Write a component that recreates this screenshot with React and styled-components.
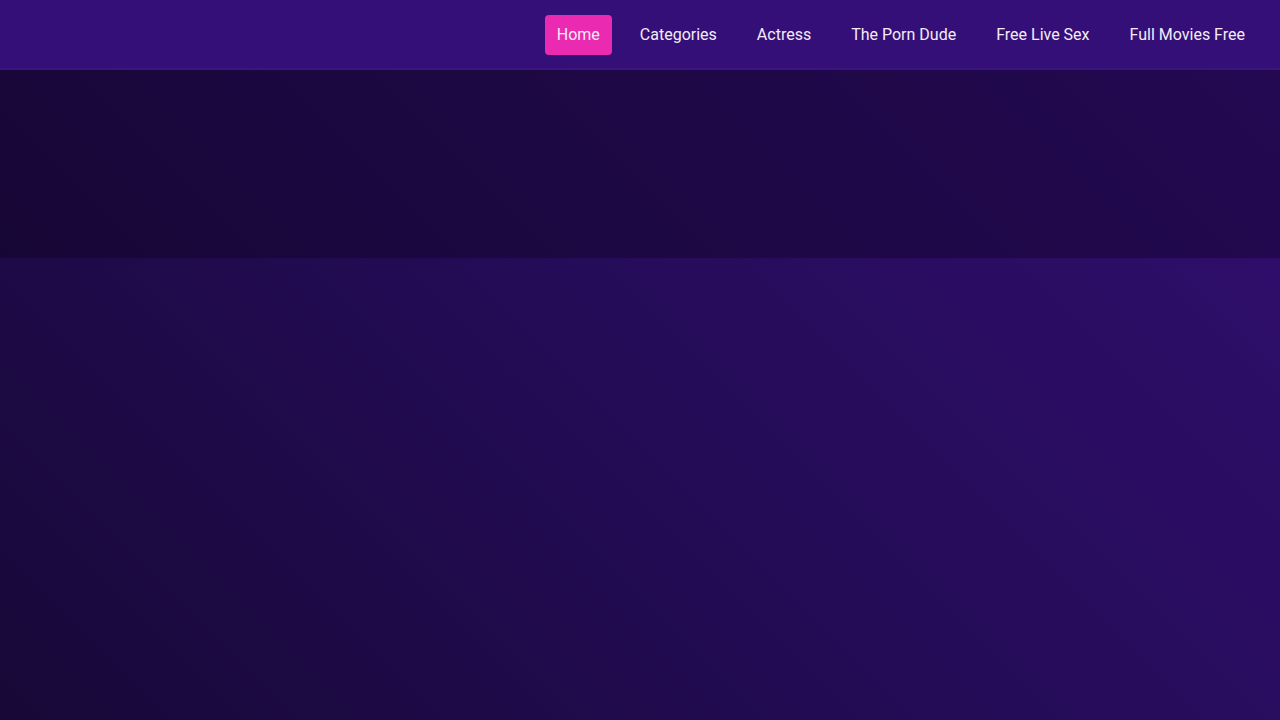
import React from 'react';
import styled, { createGlobalStyle } from 'styled-components';

const GlobalStyle = createGlobalStyle`
  * { box-sizing: border-box; }
  html, body { margin: 0; padding: 0; }
  body {
    font-family: Roboto, "Liberation Sans", sans-serif;
    background: linear-gradient(45deg, #170837 0%, #250c58 50%, #310e70 100%);
    min-height: 100vh;
  }
`;

const Page = styled.div`
  min-height: 100vh;
  display: flex;
  flex-direction: column;
`;

const Header = styled.header`
  height: 70px;
  background: #340f78;
  border-bottom: 2px solid #3a1580;
  display: flex;
  align-items: center;
  justify-content: flex-end;
  padding: 1px 23px 0 0;
`;

const Nav = styled.nav`
  display: flex;
  align-items: center;
  gap: 16px;
`;

const NavLink = styled.a`
  display: block;
  padding: 10px 12px;
  border-radius: 4px;
  font-size: 16px;
  line-height: 20px;
  font-weight: 400;
  color: #f5ebf7;
  text-decoration: none;
  background: ${p => (p.$active ? '#ea2bb2' : 'transparent')};
  cursor: pointer;
`;

const Banner = styled.section`
  height: 188px;
  background: rgba(8, 0, 20, 0.32);
`;

const links = ['Home', 'Categories', 'Actress', 'The Porn Dude', 'Free Live Sex', 'Full Movies Free'];

export default function App() {
  return (
    <>
      <GlobalStyle />
      <Page>
        <Header>
          <Nav>
            {links.map((l, i) => (
              <NavLink key={l} $active={i === 0}>{l}</NavLink>
            ))}
          </Nav>
        </Header>
        <Banner />
      </Page>
    </>
  );
}
